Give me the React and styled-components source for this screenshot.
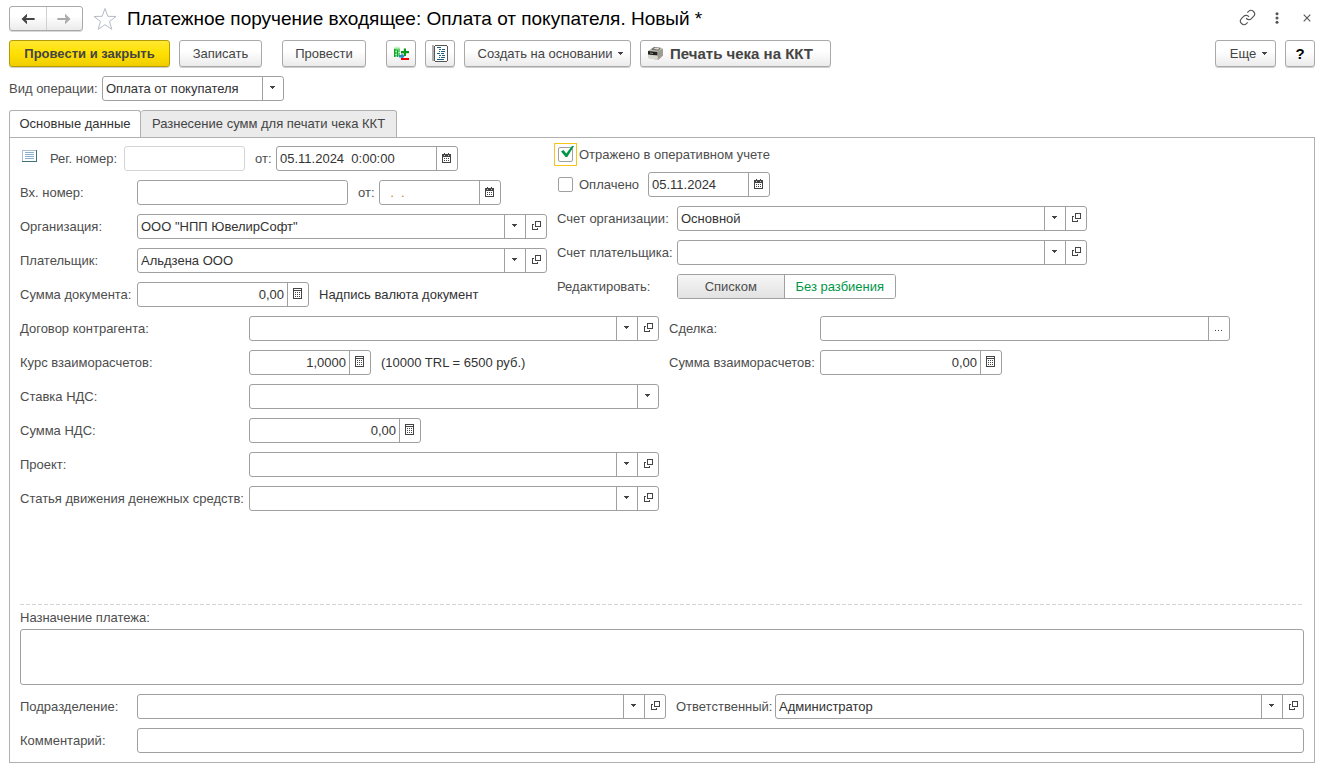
import React, { useState } from "react";
import styled, { createGlobalStyle, css } from "styled-components";

const GlobalStyle = createGlobalStyle`
  *, *::before, *::after { box-sizing: border-box; }
  body {
    margin: 0;
    background: #fff;
    color: #4d4d4d;
    font-family: "Liberation Sans", Arial, sans-serif;
    font-size: 13px;
    line-height: 16px;
  }
  button, input, select, textarea { font: inherit; color: inherit; margin: 0; }
`;

const Page = styled.div`
  display: flex;
  flex-direction: column;
  min-height: 100vh;
  padding: 6px 6px 4px 9px;
`;

/* ---------- window header ---------- */

const Header = styled.header`
  display: flex;
  align-items: center;
  height: 25px;
`;

const NavGroup = styled.div`
  display: flex;
  width: 74px;
  height: 25px;
  border: 1px solid #a9a9a9;
  border-radius: 3px;
  background: linear-gradient(#fff 40%, #ebebeb);
  box-shadow: 0 1px 0 #d8d8d8;
`;

const NavButton = styled.button`
  flex: 1;
  display: flex;
  align-items: center;
  justify-content: center;
  padding: 0;
  border: 0;
  background: none;
  color: ${(p) => (p.disabled ? "#aaa" : "#444")};
  & + & { border-left: 1px solid #d0d0d0; }
`;

const PlainButton = styled.button`
  display: flex;
  align-items: center;
  justify-content: center;
  width: 24px;
  height: 24px;
  padding: 0;
  border: 0;
  background: none;
  color: #555;
`;

const Title = styled.h1`
  flex: 1;
  margin: 0 0 0 10px;
  color: #000;
  font-size: 19px;
  font-weight: 400;
  line-height: 24px;
`;

const HeaderTools = styled.div`
  display: flex;
  gap: 6px;
  margin-right: -4px;
  padding-bottom: 2px;
`;

const StarButton = styled(PlainButton)`
  margin-left: 10px;
`;

/* ---------- command bar ---------- */

const Toolbar = styled.div`
  display: flex;
  gap: 20px;
  margin-top: 9px;
`;

const ButtonGroup = styled.div`
  display: flex;
  gap: 9px;
  ${(p) => p.$end && css`margin-left: auto;`}
`;

const Button = styled.button`
  display: flex;
  align-items: center;
  justify-content: center;
  gap: 6px;
  width: ${(p) => p.$width}px;
  height: 27px;
  padding: 0;
  border: 1px solid #a9a9a9;
  border-radius: 3px;
  background: linear-gradient(#fff 40%, #ebebeb);
  box-shadow: 0 1px 0 #d0d0d0;
  color: #444;
  white-space: nowrap;
  ${(p) => p.$menu && css`padding-left: 6px;`}
  ${(p) => p.$primary && css`
    border-color: #b39b00;
    background: linear-gradient(#ffe832, #ffe000 50%, #efcd00);
    font-weight: 700;
  `}
  ${(p) => p.$print && css`
    justify-content: flex-start;
    padding-left: 6px;
    font-size: 15px;
    font-weight: 700;
  `}
  ${(p) => p.$help && css`color: #000; font-size: 15px; font-weight: 700;`}
`;

/* ---------- fields ---------- */

const Row = styled.div`
  display: flex;
  align-items: center;
  height: 25px;
`;

const Label = styled.label`
  flex: none;
  width: ${(p) => (p.$width ? p.$width + "px" : "auto")};
  white-space: nowrap;
`;

const FieldBox = styled.div`
  display: flex;
  flex: ${(p) => (p.$width ? "none" : 1)};
  width: ${(p) => (p.$width ? p.$width + "px" : "auto")};
  min-width: 0;
  height: 25px;
  border: 1px solid ${(p) => (p.$faint ? "#d4d4d4" : "#a0a0a0")};
  border-radius: 3px;
  background: #fff;
  color: #333;
`;

const TextInput = styled.input`
  flex: 1;
  min-width: 0;
  height: 23px;
  padding: 0 3px;
  border: 0;
  outline: 0;
  background: none;
  text-align: ${(p) => (p.$right ? "right" : "left")};
  ${(p) => p.$blank && css`color: #b8862b;`}
`;

const SelectWrap = styled.div`
  flex: 1;
  display: grid;
  grid-template-columns: 1fr 21px;
  min-width: 0;
  height: 23px;
`;

const Select = styled.select`
  grid-area: 1 / 1 / 2 / 3;
  appearance: none;
  min-width: 0;
  padding: 0 24px 0 3px;
  border: 0;
  outline: 0;
  background: none;
`;

const ArrowCell = styled.span`
  grid-area: 1 / 2 / 2 / 3;
  display: flex;
  align-items: center;
  justify-content: center;
  padding: 0 1px 2px 0;
  border-left: 1px solid #a0a0a0;
  color: #444;
  pointer-events: none;
`;

const CellButton = styled.button`
  flex: none;
  display: flex;
  align-items: center;
  justify-content: center;
  width: 21px;
  height: 23px;
  padding: 0 1px 2px 0;
  border: 0;
  border-left: 1px solid #a0a0a0;
  background: none;
  color: #444;
`;

const OpenCell = styled(CellButton)`
  padding: 0 0 2px 1px;
`;

const OperationRow = styled(Row)`
  margin-top: 9px;
`;

/* ---------- tabs and panel ---------- */

const Tabs = styled.div`
  display: flex;
  margin: 9px 0 -1px;
`;

const Tab = styled.button`
  width: ${(p) => p.$width}px;
  height: 28px;
  padding: 0;
  border: 1px solid #b0b0b0;
  border-radius: 3px 3px 0 0;
  background: #ebebeb;
  color: #444;
  white-space: nowrap;
  & + & { border-left: 0; }
  &[aria-selected="true"] {
    border-bottom-color: #fff;
    background: #fff;
    color: #333;
  }
`;

const Panel = styled.main`
  flex: 1;
  display: flex;
  flex-direction: column;
  padding: 0 10px 9px;
  border: 1px solid #b0b0b0;
`;

const TopSection = styled.div`
  display: flex;
  gap: 10px;
`;

const Stack = styled.div`
  display: flex;
  flex-direction: column;
  gap: 9px;
  padding-top: ${(p) => p.$top || 0}px;
`;

const LeftStack = styled(Stack)`
  width: 527px;
`;

const DetailGrid = styled.div`
  display: grid;
  grid-template-columns: 639px 561px;
  column-gap: 10px;
  row-gap: 9px;
  margin-top: 9px;
`;

const LeftOnly = styled(Row)`
  grid-column: 1;
`;

const ListMark = styled.span`
  display: flex;
  width: 30px;
  height: 17px;
  padding-left: 2px;
`;

const Inline = styled.label`
  width: 31px;
  padding-left: 10px;
`;

const Note = styled.span`
  padding-left: 10px;
  color: #333;
`;

const Checks = styled.div`
  display: flex;
  flex-direction: column;
  gap: 6px;
`;

const CheckRow = styled(Row)`
  height: ${(p) => p.$height}px;
`;

const CheckFrame = styled.span`
  display: grid;
  place-items: center;
  width: 23px;
  height: 23px;
  margin: 0 2px 0 -3px;
  border: 1px solid ${(p) => (p.$focused ? "#f5c518" : "transparent")};
  svg { grid-area: 1 / 1; pointer-events: none; z-index: 1; }
`;

const Checkbox = styled.input`
  grid-area: 1 / 1;
  appearance: none;
  width: 15px;
  height: 15px;
  border: 1px solid #a0a0a0;
  border-radius: 2px;
  background: #fff;
`;

const Segments = styled.div`
  display: flex;
  width: 219px;
  height: 25px;
  border: 1px solid #a0a0a0;
  border-radius: 3px;
  overflow: hidden;
`;

const Segment = styled.label`
  flex: ${(p) => p.$grow} 1 0;
  display: flex;
  align-items: center;
  justify-content: center;
  background: linear-gradient(#f6f6f6, #e2e2e2);
  & + & { border-left: 1px solid #a0a0a0; }
  &:has(input:checked) { background: #fff; color: #009646; }
  input { appearance: none; width: 0; height: 0; }
`;

const Footer = styled.section`
  display: flex;
  flex-direction: column;
  margin-top: auto;
`;

const Divider = styled.div`
  height: 1px;
  margin-right: 1px;
  background: repeating-linear-gradient(90deg, #d4d4d4 0 4px, transparent 4px 6px);
`;

const PurposeLabel = styled.label`
  margin: 5px 0 3px;
`;

const Purpose = styled.textarea`
  height: 56px;
  margin-bottom: 9px;
  padding: 3px;
  border: 1px solid #a0a0a0;
  border-radius: 3px;
  outline: 0;
  resize: none;
  color: #333;
`;

const Halves = styled.div`
  display: grid;
  grid-template-columns: 117px 1fr 109px 1fr;
  align-items: center;
  margin-bottom: 9px;
`;

const SecondLabel = styled(Label)`
  padding-left: 10px;
`;

/* ---------- icons ---------- */

const Svg = ({ w, h, crisp, children }) => (
  <svg width={w} height={h} viewBox={`0 0 ${w} ${h}`} fill="none" aria-hidden="true"
    shapeRendering={crisp ? "crispEdges" : "auto"}>{children}</svg>
);

const Caret = () => (
  <Svg w={5} h={3} crisp><path d="M0 0h5v1H4v1H3v1H2V2H1V1H0z" fill="currentColor" /></Svg>
);

const OpenIcon = () => (
  <Svg w={9} h={9} crisp>
    <path d="M3 0h6v6H3zM4 1v4h4V1z" fill="currentColor" fillRule="evenodd" />
    <path d="M0 3h2v1H1v4h4V7h1v2H0z" fill="currentColor" />
  </Svg>
);

const CalendarIcon = () => (
  <Svg w={9} h={10} crisp>
    <path d="M0 1h2V0h1v1h3V0h1v1h2v9H0zM1 4v5h7V4z" fill="currentColor" fillRule="evenodd" />
    <path d="M2 2h1v1H2zM6 2h1v1H6z" fill="#ccc" />
    <path d="M2 5h1v1H2zM4 5h1v1H4zM6 5h1v1H6zM2 7h1v1H2zM4 7h1v1H4zM6 7h1v1H6z" fill="currentColor" />
  </Svg>
);

const CalcIcon = () => (
  <Svg w={9} h={11} crisp>
    <path d="M0 0h9v11H0zM1 1v1h7V1zM1 3v7h7V3z" fill="currentColor" fillRule="evenodd" />
    <path d="M2 4h1v1H2zM4 4h1v1H4zM6 4h1v1H6zM2 6h1v1H2zM4 6h1v1H4zM6 6h1v1H6zM2 8h1v1H2zM4 8h1v1H4zM6 8h1v1H6z" fill="currentColor" />
  </Svg>
);

const EllipsisIcon = () => (
  <Svg w={7} h={7} crisp><path d="M0 6h1v1H0zM3 6h1v1H3zM6 6h1v1H6z" fill="currentColor" /></Svg>
);

const ArrowLeft = () => (
  <Svg w={14} h={12}>
    <path d="M6 0.8 0.5 6 6 11.2V8L4.6 7h9V5h-9L6 4z" fill="currentColor" />
  </Svg>
);

const ArrowRight = () => (
  <Svg w={14} h={12}>
    <path d="M8 0.8 13.5 6 8 11.2V8l1.4-1h-9V5h9L8 4z" fill="currentColor" />
  </Svg>
);

const StarIcon = () => (
  <Svg w={24} h={24}>
    <path d="M12 1.5 14.8 9.3 23 9.5 16.5 14.5 18.8 22.3 12 17.7 5.2 22.3 7.5 14.5 1 9.5 9.2 9.3z"
      stroke="#b4bcc6" strokeWidth="1" />
  </Svg>
);

const LinkIcon = () => (
  <svg width="17" height="17" viewBox="0 0 24 24" fill="none" stroke="#555" strokeWidth="1.6" aria-hidden="true">
    <path d="M10 13a5 5 0 0 0 7.54.54l3-3a5 5 0 0 0-7.07-7.07l-1.72 1.71" />
    <path d="M14 11a5 5 0 0 0-7.54-.54l-3 3a5 5 0 0 0 7.07 7.07l1.71-1.71" />
  </svg>
);

const DotsIcon = () => (
  <Svg w={4} h={12}>
    <circle cx="2" cy="1.8" r="1.5" fill="#555" />
    <circle cx="2" cy="6" r="1.5" fill="#555" />
    <circle cx="2" cy="10.2" r="1.5" fill="#555" />
  </Svg>
);

const CloseIcon = () => (
  <Svg w={8} h={8}><path d="M.7.7l6.6 6.6M7.3.7.7 7.3" stroke="#555" strokeWidth="1.1" /></Svg>
);

const StockIcon = () => (
  <Svg w={17} h={16}>
    <ellipse cx="4" cy="2" rx="3.2" ry="1.6" fill="#c4f3c4" />
    <path d="M1 2.6h6v8H1z" fill="#5fd36b" />
    <path d="M1 3h1.5v8H1zM4 4h1v7H4z" fill="#12a32a" />
    <path d="M2.5 5h1.2v1H2.5zM2.5 8h1.2v1H2.5zM5.5 6h1v1h-1z" fill="#e9ffe9" />
    <path d="M6 9h2.4V7l3.2 3.2L8.4 13.4v-2H6z" fill="#2f86c9" />
    <path d="M10.8 2.4h2.2v2.7h3v2.2h-3V10h-2.2V7.300H8V5.100h2.800z" fill="#0a9a1a" />
    <path d="M8 12h8v2H8z" fill="#f30000" />
  </Svg>
);

const JournalIcon = () => (
  <Svg w={16} h={17} crisp>
    <path d="M0 0h2v16H0z" fill="#b0b0b0" />
    <path d="M2 1h13v15H2z" fill="#fff" />
    <path d="M3 0h12v1H3zM2 1h1v15H2zM15 1h1v15h-1zM3 16h12v1H3z" fill="#555" />
    <path d="M5 2h4v1H5zM7 4h2v1H7zM10 4h3v1h-3zM7 6h1v1H7zM9 6h4v1H9zM5 8h3v1H5zM9 8h3v1H9zM7 10h2v1H7zM10 10h3v1h-3zM7 12h1v1H7zM9 12h4v1H9zM5 14h7v1H5z" fill="#23607f" />
  </Svg>
);

const PrinterIcon = () => (
  <Svg w={17} h={15}>
    <path d="M1 5 6 1.500 16 2.500V9.500L11 14 1 12z" fill="#b9b9b0" />
    <path d="M4 3.500 7 1l7 .8-2.500 3z" fill="#6f6f68" />
    <path d="M6.500 2.800 8 1.700l4.500.5L11 3.700z" fill="#d8d8d0" />
    <path d="M1 5l9.500 1v3.500L1 8.500z" fill="#222" />
    <path d="M3 6.600l3 .3v1l-3-.3z" fill="#7d9387" />
    <path d="M10.500 6 16 2.800V9.500L11 14z" fill="#9c9c93" />
    <path d="M1 8.800l9.500 1V14L1 12z" fill="#d6d6cd" />
  </Svg>
);

const ListIcon = () => (
  <Svg w={15} h={12} crisp>
    <path d="M0 0h15v12H0z" fill="#a9bfd3" />
    <path d="M1 1h13v10H1z" fill="#fff" />
    <path d="M14 0h1v12h-1zM0 11h15v1H0z" fill="#3f7276" />
    <path d="M3 2h9v1H3zM3 4h9v1H3zM3 6h9v1H3zM3 8h9v1H3z" fill="#8caed0" />
  </Svg>
);

const CheckMark = () => (
  <Svg w={19} h={19}>
    <path d="M5 6.500 7.500 5 10.300 8.500 16 1H18L11.300 12H9.700z" fill="#009646" />
  </Svg>
);

/* ---------- composed fields ---------- */

const OpenButton = () => <OpenCell type="button" aria-label="Открыть"><OpenIcon /></OpenCell>;

function ComboField({ id, value = "", width, open = true }) {
  return (
    <FieldBox $width={width}>
      <SelectWrap>
        <Select id={id} defaultValue={value}><option value={value}>{value}</option></Select>
        <ArrowCell><Caret /></ArrowCell>
      </SelectWrap>
      {open && <OpenButton />}
    </FieldBox>
  );
}

function DateField({ id, value, width, blank }) {
  return (
    <FieldBox $width={width}>
      <TextInput id={id} defaultValue={value} $blank={blank} />
      <CellButton type="button" aria-label="Выбрать дату"><CalendarIcon /></CellButton>
    </FieldBox>
  );
}

function NumberField({ id, value, width }) {
  return (
    <FieldBox $width={width}>
      <TextInput id={id} defaultValue={value} $right inputMode="decimal" />
      <CellButton type="button" aria-label="Калькулятор"><CalcIcon /></CellButton>
    </FieldBox>
  );
}

function CheckField({ id, children, labelWidth, focused, initial }) {
  const [on, setOn] = useState(initial);
  return (
    <>
      <CheckFrame $focused={focused}>
        <Checkbox type="checkbox" id={id} checked={on} onChange={(e) => setOn(e.target.checked)} />
        {on && <CheckMark />}
      </CheckFrame>
      <Label htmlFor={id} $width={labelWidth}>{children}</Label>
    </>
  );
}

export default function App() {
  return (
    <>
      <GlobalStyle />
      <Page>
        <Header>
          <NavGroup>
            <NavButton type="button" aria-label="Назад"><ArrowLeft /></NavButton>
            <NavButton type="button" aria-label="Вперед" disabled><ArrowRight /></NavButton>
          </NavGroup>
          <StarButton type="button" aria-label="В избранное"><StarIcon /></StarButton>
          <Title>Платежное поручение входящее: Оплата от покупателя. Новый *</Title>
          <HeaderTools>
            <PlainButton type="button" aria-label="Получить ссылку"><LinkIcon /></PlainButton>
            <PlainButton type="button" aria-label="Меню"><DotsIcon /></PlainButton>
            <PlainButton type="button" aria-label="Закрыть"><CloseIcon /></PlainButton>
          </HeaderTools>
        </Header>

        <Toolbar>
          <ButtonGroup>
            <Button type="button" $width={161} $primary>Провести и закрыть</Button>
            <Button type="button" $width={83}>Записать</Button>
          </ButtonGroup>
          <Button type="button" $width={84}>Провести</Button>
          <ButtonGroup>
            <Button type="button" $width={30} aria-label="Движения документа"><StockIcon /></Button>
            <Button type="button" $width={30} aria-label="Журнал"><JournalIcon /></Button>
            <Button type="button" $width={167} $menu>Создать на основании<Caret /></Button>
            <Button type="button" $width={191} $print><PrinterIcon />Печать чека на ККТ</Button>
          </ButtonGroup>
          <ButtonGroup $end>
            <Button type="button" $width={61} $menu>Еще<Caret /></Button>
            <Button type="button" $width={30} $help>?</Button>
          </ButtonGroup>
        </Toolbar>

        <OperationRow>
          <Label htmlFor="operation" $width={93}>Вид операции:</Label>
          <ComboField id="operation" width={182} value="Оплата от покупателя" open={false} />
        </OperationRow>

        <Tabs role="tablist">
          <Tab type="button" role="tab" aria-selected="true" $width={132}>Основные данные</Tab>
          <Tab type="button" role="tab" aria-selected="false" $width={256}>Разнесение сумм для печати чека ККТ</Tab>
        </Tabs>

        <Panel>
          <TopSection>
            <LeftStack $top={8}>
              <Row>
                <ListMark><ListIcon /></ListMark>
                <Label htmlFor="reg" $width={74}>Рег. номер:</Label>
                <FieldBox $width={121} $faint><TextInput id="reg" /></FieldBox>
                <Inline htmlFor="regDate">от:</Inline>
                <DateField id="regDate" width={182} value="05.11.2024  0:00:00" />
              </Row>
              <Row>
                <Label htmlFor="inc" $width={117}>Вх. номер:</Label>
                <FieldBox $width={211}><TextInput id="inc" /></FieldBox>
                <Inline htmlFor="incDate">от:</Inline>
                <DateField id="incDate" width={122} value="  .  ." blank />
              </Row>
              <Row>
                <Label htmlFor="org" $width={117}>Организация:</Label>
                <ComboField id="org" value={'ООО "НПП ЮвелирСофт"'} />
              </Row>
              <Row>
                <Label htmlFor="payer" $width={117}>Плательщик:</Label>
                <ComboField id="payer" value="Альдзена ООО" />
              </Row>
              <Row>
                <Label htmlFor="sum" $width={117}>Сумма документа:</Label>
                <NumberField id="sum" width={172} value="0,00" />
                <Note>Надпись валюта документ</Note>
              </Row>
            </LeftStack>
            <Stack $top={5}>
              <Checks>
                <CheckRow $height={23}>
                  <CheckField id="reflected" focused initial>Отражено в оперативном учете</CheckField>
                </CheckRow>
                <CheckRow $height={25}>
                  <CheckField id="paid" labelWidth={69} initial={false}>Оплачено</CheckField>
                  <DateField id="paidDate" width={122} value="05.11.2024" />
                </CheckRow>
              </Checks>
              <Row>
                <Label htmlFor="orgAcc" $width={120}>Счет организации:</Label>
                <ComboField id="orgAcc" width={410} value="Основной" />
              </Row>
              <Row>
                <Label htmlFor="payerAcc" $width={120}>Счет плательщика:</Label>
                <ComboField id="payerAcc" width={410} />
              </Row>
              <Row role="radiogroup" aria-labelledby="modeLabel">
                <Label as="span" id="modeLabel" $width={120}>Редактировать:</Label>
                <Segments>
                  <Segment $grow={106}><input type="radio" name="mode" />Списком</Segment>
                  <Segment $grow={111}><input type="radio" name="mode" defaultChecked />Без разбиения</Segment>
                </Segments>
              </Row>
            </Stack>
          </TopSection>

          <DetailGrid>
            <Row>
              <Label htmlFor="contract" $width={229}>Договор контрагента:</Label>
              <ComboField id="contract" />
            </Row>
            <Row>
              <Label htmlFor="deal" $width={151}>Сделка:</Label>
              <FieldBox>
                <TextInput id="deal" />
                <CellButton type="button" aria-label="Выбрать"><EllipsisIcon /></CellButton>
              </FieldBox>
            </Row>
            <Row>
              <Label htmlFor="rate" $width={229}>Курс взаиморасчетов:</Label>
              <NumberField id="rate" width={122} value="1,0000" />
              <Note>(10000 TRL = 6500 руб.)</Note>
            </Row>
            <Row>
              <Label htmlFor="settle" $width={151}>Сумма взаиморасчетов:</Label>
              <NumberField id="settle" width={182} value="0,00" />
            </Row>
            <LeftOnly>
              <Label htmlFor="vat" $width={229}>Ставка НДС:</Label>
              <ComboField id="vat" open={false} />
            </LeftOnly>
            <LeftOnly>
              <Label htmlFor="vatSum" $width={229}>Сумма НДС:</Label>
              <NumberField id="vatSum" width={172} value="0,00" />
            </LeftOnly>
            <LeftOnly>
              <Label htmlFor="project" $width={229}>Проект:</Label>
              <ComboField id="project" />
            </LeftOnly>
            <LeftOnly>
              <Label htmlFor="article" $width={229}>Статья движения денежных средств:</Label>
              <ComboField id="article" />
            </LeftOnly>
          </DetailGrid>

          <Footer>
            <Divider />
            <PurposeLabel htmlFor="purpose">Назначение платежа:</PurposeLabel>
            <Purpose id="purpose" />
            <Halves>
              <Label htmlFor="dept">Подразделение:</Label>
              <ComboField id="dept" />
              <SecondLabel htmlFor="resp">Ответственный:</SecondLabel>
              <ComboField id="resp" value="Администратор" />
            </Halves>
            <Row>
              <Label htmlFor="comment" $width={117}>Комментарий:</Label>
              <FieldBox><TextInput id="comment" /></FieldBox>
            </Row>
          </Footer>
        </Panel>
      </Page>
    </>
  );
}
